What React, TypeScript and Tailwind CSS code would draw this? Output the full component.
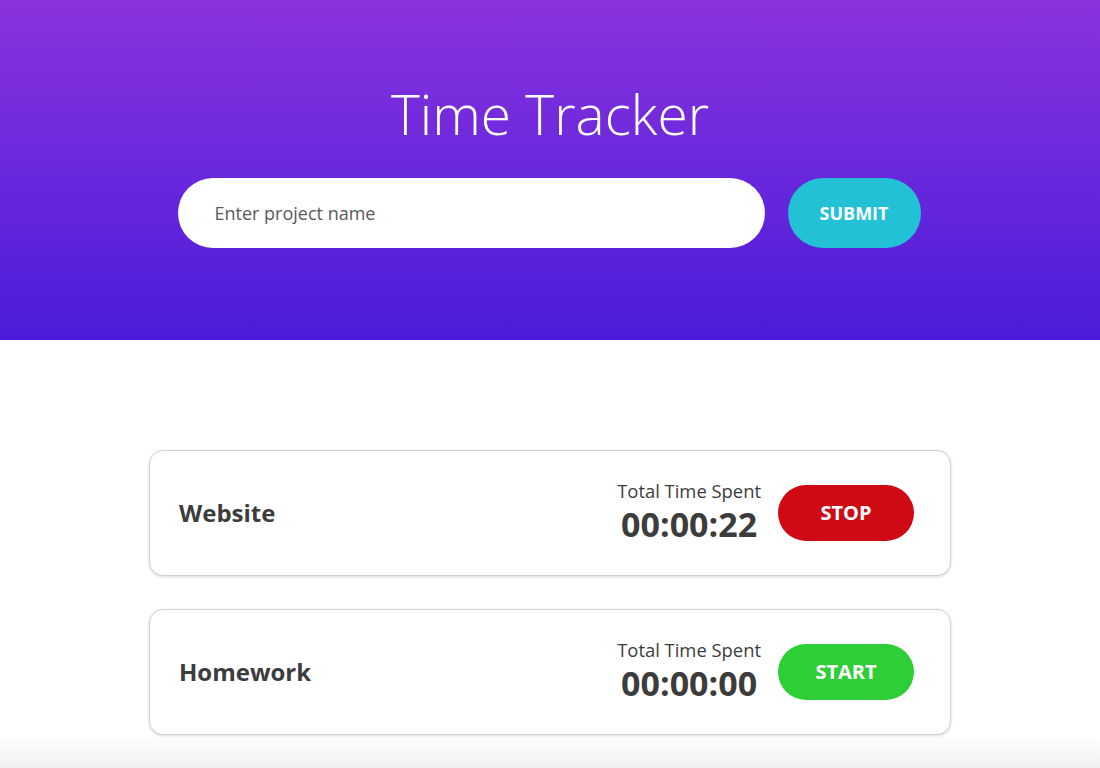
function ProjectCard({ name, time, running }: { name: string; time: string; running: boolean }) {
  return (
    <div className="flex h-[126px] items-center justify-between rounded-[14px] border border-[#d0d0d0] bg-white pl-[29px] pr-[36px] shadow-[0_1px_3px_rgba(0,0,0,0.15)]">
      <span className="text-[24px] font-bold text-[#3c3c3c]">{name}</span>
      <div className="flex items-center gap-[17px]">
        <div className="flex flex-col items-center text-[#3c3c3c]">
          <span className="text-[18.4px] leading-[22px]">Total Time Spent</span>
          <span className="text-[34px] font-bold leading-[44px]">{time}</span>
        </div>
        <button
          className={
            running
              ? "h-[56px] w-[136px] rounded-full bg-[#d00a14] text-[20px] font-bold text-white"
              : "h-[56px] w-[136px] rounded-full bg-[#2ece36] text-[20px] font-bold text-white"
          }
        >
          {running ? "STOP" : "START"}
        </button>
      </div>
    </div>
  );
}

export default function App() {
  return (
    <div className="min-h-[768px] bg-[linear-gradient(to_bottom,#ffffff_0px,#ffffff_735px,#f1f1f1_768px)] font-['Open_Sans','Liberation_Sans',sans-serif]">
      <header className="flex h-[340px] flex-col items-center bg-[linear-gradient(to_bottom,#8a33de,#4a1cd9)] pt-[79px]">
        <h1 className="text-[55px] font-light leading-[70px] text-white">Time Tracker</h1>
        <div className="mt-[29px] flex items-center gap-[23px] pr-[2px]">
          <input
            className="h-[70px] w-[587px] rounded-full bg-white px-[37px] text-[18px] text-[#555] outline-none placeholder:text-[#5a5a5a]"
            placeholder="Enter project name"
          />
          <button className="h-[70px] w-[133px] rounded-full bg-[#22c1d6] text-[18px] font-bold text-white">
            SUBMIT
          </button>
        </div>
      </header>
      <main className="mx-auto flex w-[802px] flex-col gap-[33px] pt-[110px]">
        <ProjectCard name="Website" time="00:00:22" running={true} />
        <ProjectCard name="Homework" time="00:00:00" running={false} />
      </main>
    </div>
  );
}
